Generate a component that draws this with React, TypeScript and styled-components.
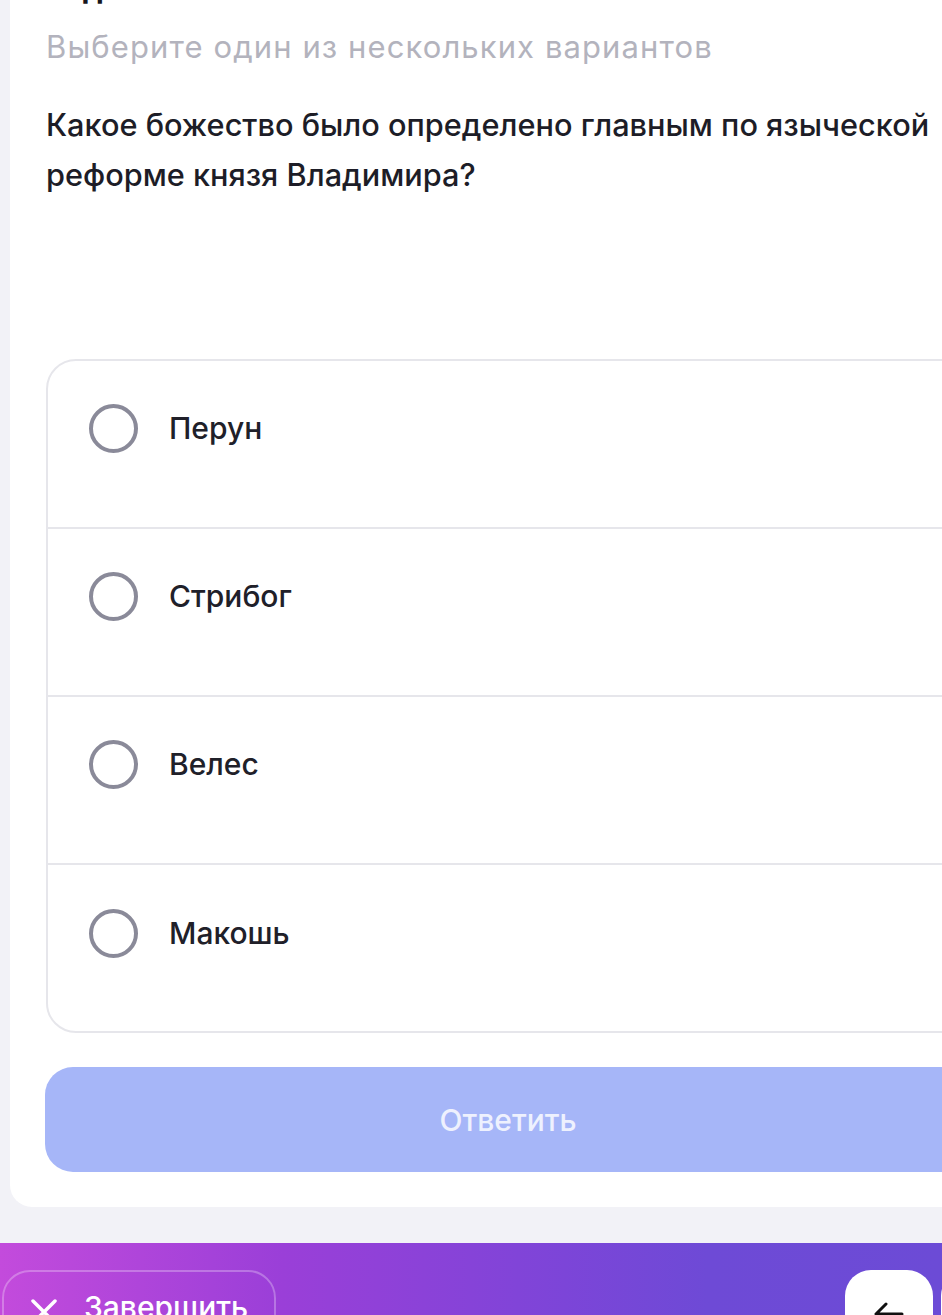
import React from "react";
import styled, { createGlobalStyle } from "styled-components";

const GlobalStyle = createGlobalStyle`
  html, body {
    margin: 0;
    padding: 0;
    background: #f2f2f7;
    overflow: hidden;
  }
  * {
    box-sizing: border-box;
  }
`;

const Screen = styled.div`
  width: 942px;
  height: 1315px;
  overflow: hidden;
  display: flex;
  flex-direction: column;
  font-family: Inter, "Noto Sans", sans-serif;
  background: #f2f2f7;
`;

const Card = styled.div`
  margin-left: 10px;
  width: 1000px;
  background: #ffffff;
  border-radius: 0 0 22px 22px;
  padding: 0 34px 35px 36px;
  flex-shrink: 0;
`;

// heading sits mostly above the scroll position, only the descenders peek in
const Title = styled.h1`
  margin: -27px 0 0;
  height: 30px;
  font-size: 30px;
  line-height: 30px;
  font-weight: 700;
  color: #16161d;
`;

const Hint = styled.p`
  margin: 26px 0 0;
  font-size: 31px;
  line-height: 36px;
  letter-spacing: 1.1px;
  color: #b3b3bd;
`;

const Question = styled.p`
  margin: 35px 0 0;
  max-width: 900px;
  font-size: 30.7px;
  line-height: 50px;
  font-weight: 500;
  color: #1d1d27;
`;

const Options = styled.div`
  margin-top: 159px;
  border: 2px solid #e6e6eb;
  border-radius: 30px;
  overflow: hidden;
`;

const Option = styled.label<{ $last?: boolean }>`
  display: flex;
  align-items: center;
  gap: 31px;
  height: ${(p) => (p.$last ? "166px" : "168px")};
  padding: 0 0 ${(p) => (p.$last ? "30px" : "32px")} 41px;
  border-bottom: ${(p) => (p.$last ? "none" : "2px solid #e6e6eb")};
  cursor: pointer;
`;

const Radio = styled.span`
  width: 49px;
  height: 49px;
  border-radius: 50%;
  border: 4.5px solid #8a8a99;
  flex-shrink: 0;
`;

const OptionText = styled.span`
  font-size: 30px;
  font-weight: 500;
  color: #202029;
`;

const SubmitButton = styled.button`
  display: block;
  margin: 34px 0 0 -1px;
  width: 926px;
  height: 105px;
  border: none;
  border-radius: 28px;
  background: #a6b6f8;
  color: #eef1fe;
  font-family: inherit;
  font-size: 30px;
  font-weight: 500;
`;

const Gap = styled.div`
  height: 36px;
  flex-shrink: 0;
`;

const BottomBar = styled.div`
  flex: 1;
  display: flex;
  justify-content: space-between;
  align-items: flex-start;
  padding: 27px 0 0 2px;
  background: linear-gradient(90deg, #c34bdc 0%, #9a3fd8 30%, #7c45d8 60%, #6e4ad6 75%, #6c4bd6 100%);
`;

const FinishButton = styled.button`
  display: flex;
  align-items: flex-start;
  gap: 26px;
  width: 274px;
  height: 80px;
  padding: 17px 0 0 26px;
  border: 2px solid rgba(255, 255, 255, 0.28);
  border-radius: 28px;
  background: transparent;
  color: #ffffff;
  font-family: inherit;
  font-size: 30px;
  font-weight: 500;
`;

const RightGroup = styled.div`
  display: flex;
  gap: 8px;
  margin-right: -87px;
`;

const IconButton = styled.button`
  width: 88px;
  height: 80px;
  border: none;
  border-radius: 26px;
  background: #ffffff;
  display: flex;
  align-items: flex-start;
  justify-content: center;
  padding-top: 24px;
`;

const options = ["Перун", "Стрибог", "Велес", "Макошь"];

export default function App() {
  return (
    <Screen>
      <GlobalStyle />
      <Card>
        <Title>Задание</Title>
        <Hint>Выберите один из нескольких вариантов</Hint>
        <Question>
          Какое божество было определено главным по языческой реформе князя Владимира?
        </Question>
        <Options>
          {options.map((o, i) => (
            <Option key={o} $last={i === options.length - 1}>
              <Radio />
              <OptionText>{o}</OptionText>
            </Option>
          ))}
        </Options>
        <SubmitButton>Ответить</SubmitButton>
      </Card>
      <Gap />
      <BottomBar>
        <FinishButton>
          <svg width="28" height="28" viewBox="0 0 28 28" style={{ marginTop: 9 }}>
            <path d="M3 3 L25 25 M25 3 L3 25" stroke="#fff" strokeWidth="3.5" strokeLinecap="round" />
          </svg>
          Завершить
        </FinishButton>
        <RightGroup>
          <IconButton>
            <svg width="32" height="28" viewBox="0 0 32 28" style={{ marginTop: 6 }}>
              <path d="M29 14 H4 M13 4 L3 14 L13 24" stroke="#111" strokeWidth="3" fill="none" strokeLinecap="round" strokeLinejoin="round" />
            </svg>
          </IconButton>
          <IconButton />
        </RightGroup>
      </BottomBar>
    </Screen>
  );
}
